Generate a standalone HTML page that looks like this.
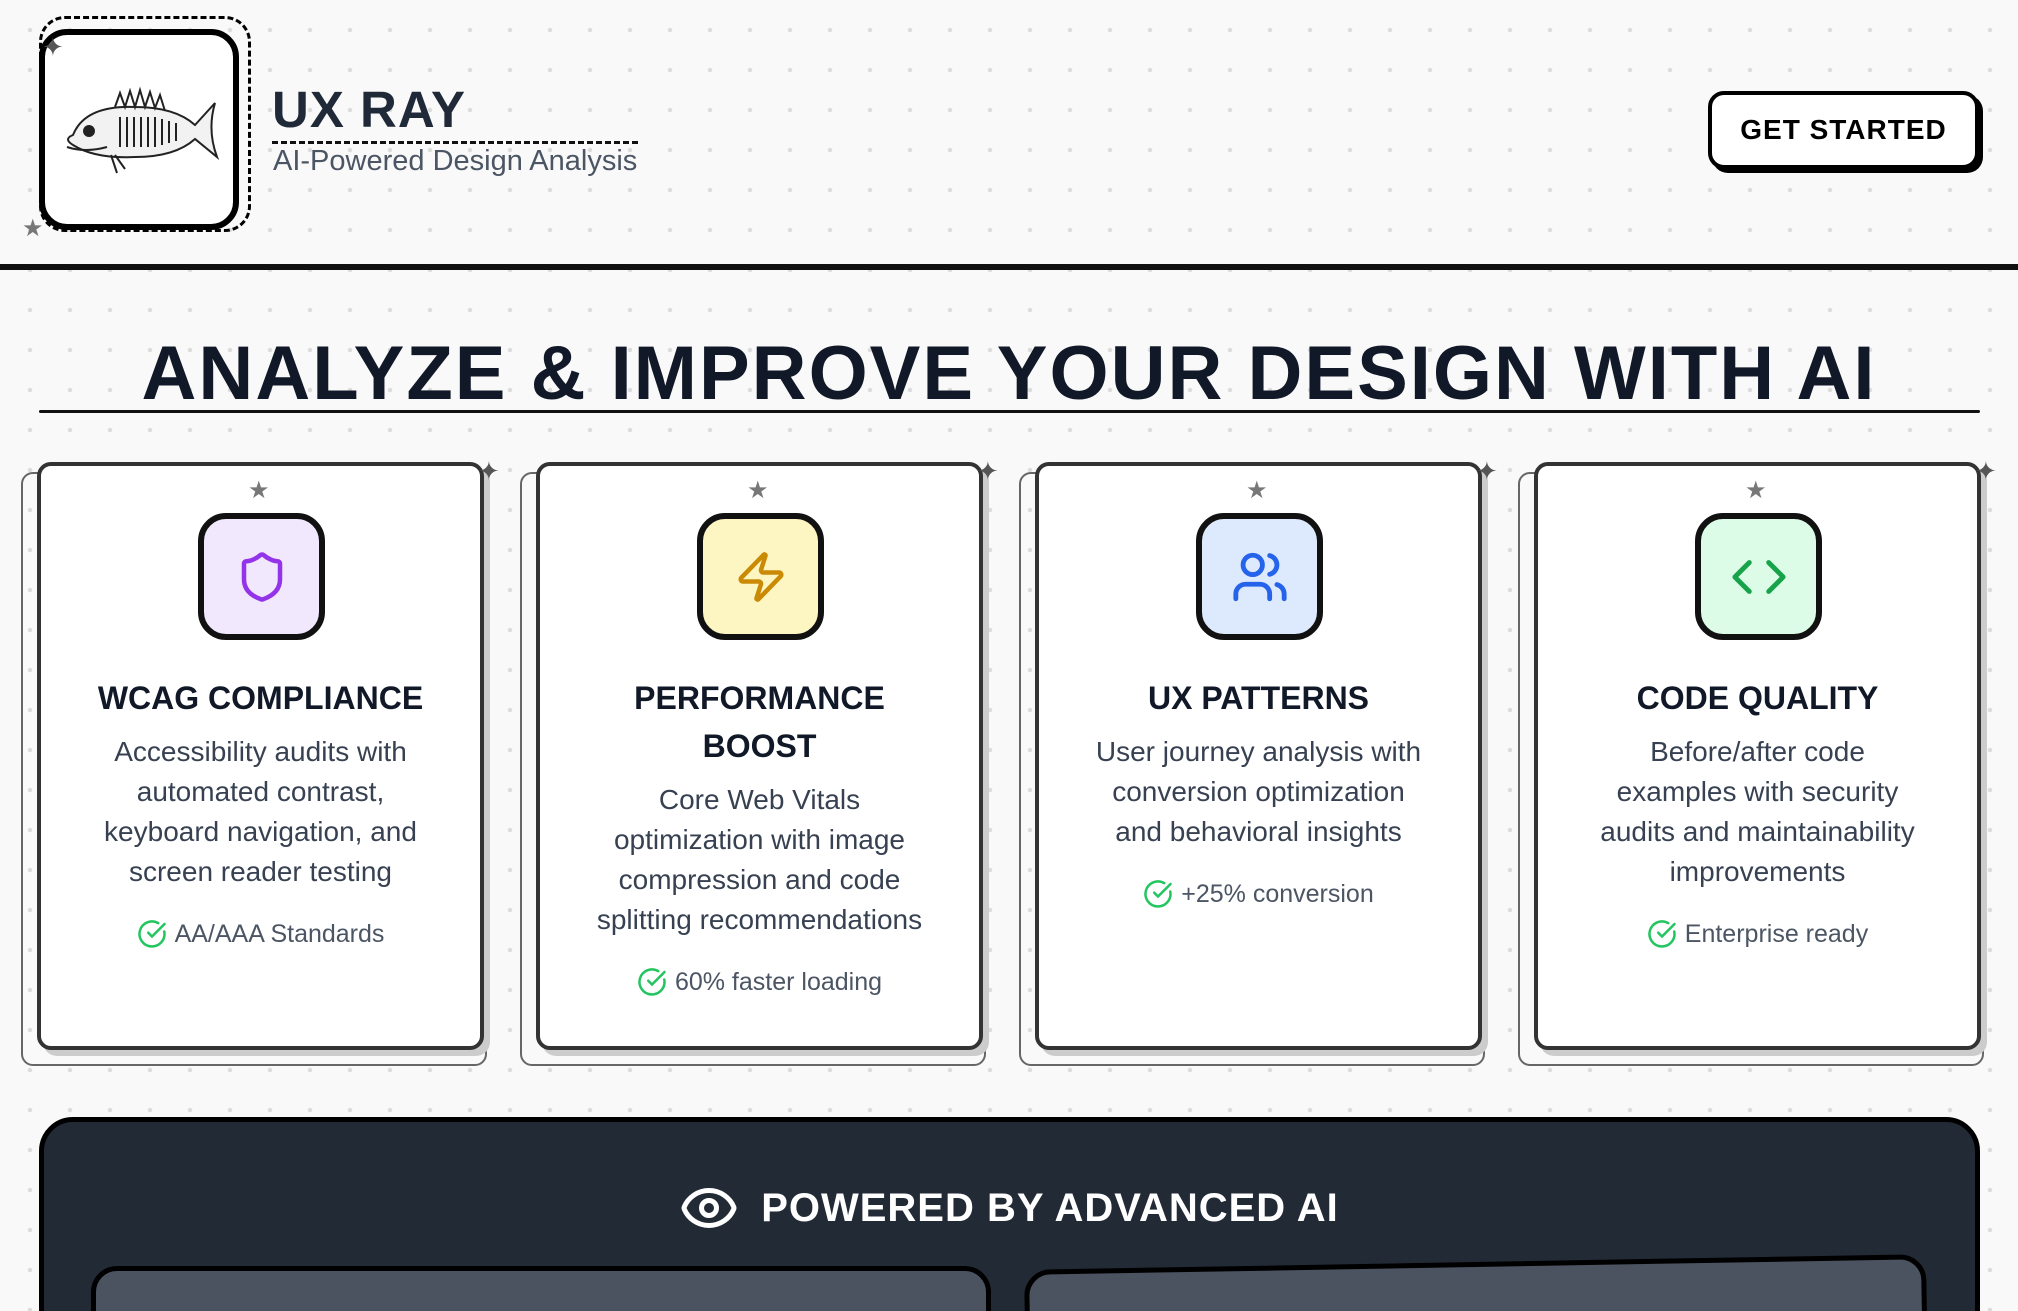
<!DOCTYPE html>
<html><head><meta charset="utf-8"><style>
*{box-sizing:border-box;margin:0;padding:0}
html,body{width:2018px;height:1311px;overflow:hidden}
body{background:#f9f9f9;background-image:radial-gradient(circle,#dcdcdc 2px,transparent 2.5px);background-size:40px 40px;background-position:10px 10px;font-family:"Comic Sans MS","Liberation Sans","DejaVu Sans",sans-serif;color:#1f2937;position:relative}
.abs{position:absolute}
.logo-o{left:39px;top:16px;width:212px;height:216px;border:3px dashed #000;border-radius:26px}
.logo{left:39px;top:29px;width:200px;height:201px;border:6px solid #000;border-radius:28px;background:#fff}
.title{left:272px;top:80px;font-size:51px;font-weight:bold;color:#1f2937;letter-spacing:1px}
.uline{left:272px;top:141px;width:366px;height:4px;border-top:3px dashed #111}
.sub{left:273px;top:145px;font-size:29px;color:#4b5563}
.hdr{left:0;top:264px;width:2018px;height:6px;background:#111}
.btn{left:1708px;top:91px;width:271px;height:78px;border:4px solid #000;border-radius:16px;background:#fff;box-shadow:4px 4px 0 #000;font-size:28px;font-weight:bold;text-align:center;line-height:70px;color:#000;letter-spacing:1px}
h1{position:absolute;left:0;width:2018px;top:330px;text-align:center;font-size:76px;font-weight:bold;color:#111827;letter-spacing:2px}
.hl{left:39px;top:410px;width:1941px;height:3px;background:#111;border-radius:2px}
.back{width:466px;height:594px;border:2px solid #666;border-radius:12px}
.card{width:447px;height:588px;border:4px solid #333;border-radius:14px;background:#fff;box-shadow:6px 6px 0 #ccc;text-align:center}
.ib{position:absolute;left:157px;top:47px;width:127px;height:127px;border:6px solid #111;border-radius:28px;display:flex;align-items:center;justify-content:center}
.star{position:absolute;left:207px;top:10px;color:#777;font-size:24px}
.ct{position:absolute;left:52px;right:52px;top:208px;font-size:32px;font-weight:bold;color:#111827;line-height:48px}
.cd{font-size:28px;font-weight:normal;color:#374151;line-height:40px;margin-top:10px}
.ck{font-size:25px;font-weight:normal;color:#4b5563;margin-top:18px;display:flex;justify-content:center;align-items:center;gap:8px;margin-left:-40px;margin-right:-40px}
.dark{left:39px;top:1117px;width:1941px;height:260px;background:#222a36;border:5px solid #000;border-radius:34px}
.pw{left:0;width:2018px;top:1178px;text-align:center;color:#fff;font-size:40px;font-weight:bold;letter-spacing:1px;display:flex;justify-content:center;align-items:center;gap:22px}
.pan{height:120px;background:#4b5361;border:5px solid #000;border-radius:26px}
</style></head><body>
<div class="abs logo-o"></div>
<div class="abs logo">
<svg width="190" height="190" viewBox="0 0 190 190"><g fill="none" stroke="#222" stroke-width="2">
<path d="M28 100 Q40 70 90 72 Q130 72 150 90 L170 68 Q162 95 172 122 L150 104 Q130 122 90 122 Q50 124 28 110 Q18 104 28 100Z" fill="#f2f2f2"/>
<circle cx="44" cy="96" r="5" fill="#222"/>
<path d="M70 72 L75 58 L80 72 L85 56 L90 72 L95 55 L100 72 L105 57 L110 73 L115 60 L120 76"/>
<path d="M75 82 V112 M82 82 V112 M89 82 V112 M96 82 V112 M103 82 V112 M110 82 V112 M117 84 V110 M124 86 V108 M131 88 V106"/>
<path d="M22 112 Q40 118 62 112 M66 120 L72 138 M70 120 L80 134"/>
</g></svg></div>
<div class="abs" style="left:42px;top:32px;color:#555;font-size:26px">✦</div>
<div class="abs" style="left:22px;top:214px;color:#777;font-size:24px">★</div>
<div class="abs title">UX RAY</div>
<div class="abs uline"></div>
<div class="abs sub">AI-Powered Design Analysis</div>
<div class="abs btn">GET STARTED</div>
<div class="abs hdr"></div>
<h1>ANALYZE &amp; IMPROVE YOUR DESIGN WITH AI</h1>
<div class="abs hl"></div>

<div class="abs back" style="left:21px;top:472px"></div>
<div class="abs card" style="left:37px;top:462px"><div class="star">★</div>
<div class="ib" style="background:#f1e8fd"><svg width="54" height="54" viewBox="0 0 24 24" fill="none" stroke="#9333ea" stroke-width="2" stroke-linecap="round" stroke-linejoin="round"><path d="M20 13c0 5-3.5 7.5-7.66 8.95a1 1 0 0 1-.67-.01C7.5 20.5 4 18 4 13V6a1 1 0 0 1 1-1c2 0 4.5-1.2 6.24-2.72a1.170 1.17 0 0 1 1.52 0C14.51 3.81 17 5 19 5a1 1 0 0 1 1 1z"/></svg></div>
<div class="ct">WCAG COMPLIANCE<div class="cd">Accessibility audits with automated contrast, keyboard navigation, and screen reader testing</div>
<div class="ck"><svg width="30" height="30" viewBox="0 0 24 24" fill="none" stroke="#22c55e" stroke-width="2" stroke-linecap="round"><path d="M21.8 10A10 10 0 1 1 17 3.3"/><path d="m9 11 3 3L22 4"/></svg>AA/AAA Standards</div></div></div>
<div class="abs" style="left:478px;top:456px;color:#555;font-size:26px">✦</div>

<div class="abs back" style="left:520px;top:472px"></div>
<div class="abs card" style="left:536px;top:462px"><div class="star">★</div>
<div class="ib" style="background:#fdf6c3"><svg width="54" height="54" viewBox="0 0 24 24" fill="none" stroke="#ca8a04" stroke-width="2" stroke-linecap="round" stroke-linejoin="round"><path d="M4 14a1 1 0 0 1-.78-1.63l9.9-10.2a.5.5 0 0 1 .86.46l-1.92 6.02A1 1 0 0 0 13 10h7a1 1 0 0 1 .78 1.63l-9.9 10.2a.5.5 0 0 1-.86-.46l1.92-6.020A1 1 0 0 0 11 14z"/></svg></div>
<div class="ct">PERFORMANCE BOOST<div class="cd">Core Web Vitals optimization with image compression and code splitting recommendations</div>
<div class="ck"><svg width="30" height="30" viewBox="0 0 24 24" fill="none" stroke="#22c55e" stroke-width="2" stroke-linecap="round"><path d="M21.8 10A10 10 0 1 1 17 3.3"/><path d="m9 11 3 3L22 4"/></svg>60% faster loading</div></div></div>
<div class="abs" style="left:977px;top:456px;color:#555;font-size:26px">✦</div>

<div class="abs back" style="left:1019px;top:472px"></div>
<div class="abs card" style="left:1035px;top:462px"><div class="star">★</div>
<div class="ib" style="background:#dde9fd"><svg width="58" height="58" viewBox="0 0 24 24" fill="none" stroke="#2563eb" stroke-width="2" stroke-linecap="round" stroke-linejoin="round"><path d="M16 21v-2a4 4 0 0 0-4-4H6a4 4 0 0 0-4 4v2"/><circle cx="9" cy="7" r="4"/><path d="M22 21v-2a4 4 0 0 0-3-3.870"/><path d="M16 3.13a4 4 0 0 1 0 7.75"/></svg></div>
<div class="ct">UX PATTERNS<div class="cd">User journey analysis with conversion optimization and behavioral insights</div>
<div class="ck"><svg width="30" height="30" viewBox="0 0 24 24" fill="none" stroke="#22c55e" stroke-width="2" stroke-linecap="round"><path d="M21.8 10A10 10 0 1 1 17 3.3"/><path d="m9 11 3 3L22 4"/></svg>+25% conversion</div></div></div>
<div class="abs" style="left:1476px;top:456px;color:#555;font-size:26px">✦</div>

<div class="abs back" style="left:1518px;top:472px"></div>
<div class="abs card" style="left:1534px;top:462px"><div class="star">★</div>
<div class="ib" style="background:#dcfce7"><svg width="58" height="58" viewBox="0 0 24 24" fill="none" stroke="#16a34a" stroke-width="2" stroke-linecap="round" stroke-linejoin="round"><path d="m16 18 6-6-6-6"/><path d="m8 6-6 6 6 6"/></svg></div>
<div class="ct">CODE QUALITY<div class="cd">Before/after code examples with security audits and maintainability improvements</div>
<div class="ck"><svg width="30" height="30" viewBox="0 0 24 24" fill="none" stroke="#22c55e" stroke-width="2" stroke-linecap="round"><path d="M21.8 10A10 10 0 1 1 17 3.3"/><path d="m9 11 3 3L22 4"/></svg>Enterprise ready</div></div></div>
<div class="abs" style="left:1975px;top:456px;color:#555;font-size:26px">✦</div>

<div class="abs dark"></div>
<div class="abs pw"><svg width="60" height="60" viewBox="0 0 24 24" fill="none" stroke="#fff" stroke-width="2" stroke-linecap="round" stroke-linejoin="round"><path d="M2.06 12.35a1 1 0 0 1 0-.7 10.75 10.75 0 0 1 19.88 0 1 1 0 0 1 0 .7 10.75 10.75 0 0 1-19.88 0"/><circle cx="12" cy="12" r="3"/></svg>POWERED BY ADVANCED AI</div>
<div class="abs pan" style="left:91px;top:1266px;width:900px"></div>
<div class="abs pan" style="left:1025px;top:1262px;width:902px;transform:rotate(-1deg)"></div>
</body></html>
